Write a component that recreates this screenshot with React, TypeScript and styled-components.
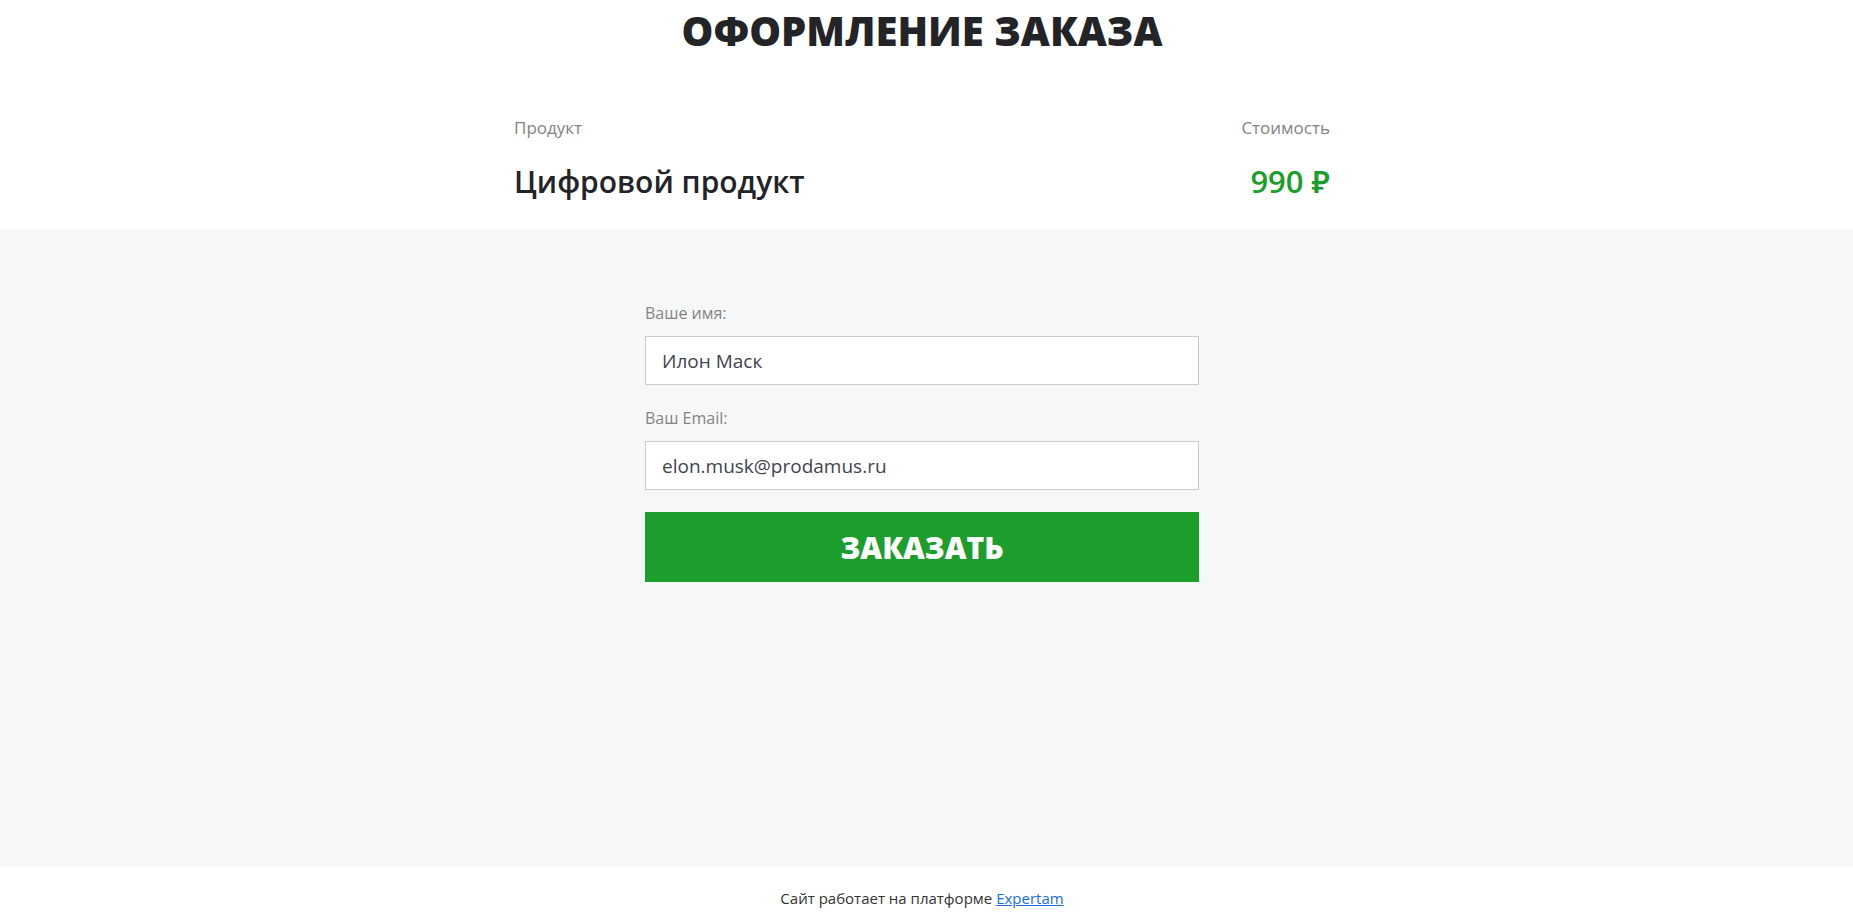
import React, { FC } from 'react';
import styled, { createGlobalStyle } from 'styled-components';

const Colors = {
    text: '#232427',
    subtle: '#848484',
    green: '#1b9e2b',
    border: '#cbcbcb',
    grayBg: '#f6f8f7',
    inputText: '#3f4450',
    link: '#1a6fe0',
};

const GlobalStyle = createGlobalStyle`
    * {
        box-sizing: border-box;
    }

    body {
        margin: 0;
        font-family: 'Open Sans', 'Noto Sans', sans-serif;
        color: ${Colors.text};
        background: #fff;
    }
`;

const Page = styled.div`
    display: flex;
    flex-direction: column;
    min-height: 100vh;
`;

const Header = styled.header`
    display: flex;
    flex-direction: column;
    align-items: center;

    padding: 7px 9px 29px 0;
`;

const Title = styled.h1`
    margin: 0;

    font-size: 40px;
    font-weight: 800;
    line-height: 48px;
    text-transform: uppercase;
    color: ${Colors.text};
`;

const ProductTable = styled.div`
    display: grid;
    grid-template-columns: 1fr auto;
    row-gap: 22px;

    width: 816px;
    margin-top: 61px;
`;

const ColumnLabel = styled.div<{ $right?: boolean }>`
    font-size: 17px;
    line-height: 24px;
    color: ${Colors.subtle};
    text-align: ${({ $right }) => ($right ? 'right' : 'left')};
`;

const ProductName = styled.div`
    font-size: 30px;
    font-weight: 600;
    line-height: 39px;
    color: ${Colors.text};
`;

const Price = styled.div`
    font-size: 31px;
    font-weight: 600;
    line-height: 39px;
    color: ${Colors.green};
    text-align: right;
`;

const FormSection = styled.section`
    flex: 1;
    display: flex;
    justify-content: center;

    padding: 72px 9px 0 0;

    background: ${Colors.grayBg};
`;

const OrderForm = styled.form`
    display: flex;
    flex-direction: column;

    width: 554px;
`;

const Label = styled.label`
    margin-bottom: 12px;

    font-size: 16px;
    line-height: 22px;
    color: ${Colors.subtle};
`;

const Input = styled.input`
    height: 49px;
    margin-bottom: 22px;
    padding: 0 16px;

    border: 1px solid ${Colors.border};
    border-radius: 0;
    outline: none;
    background: #fff;

    font-family: inherit;
    font-size: 19px;
    color: ${Colors.inputText};
`;

const SubmitButton = styled.button`
    height: 70px;

    border: none;
    background: ${Colors.green};

    font-family: inherit;
    font-size: 30px;
    font-weight: 800;
    line-height: 70px;
    text-transform: uppercase;
    color: #fff;
    cursor: pointer;
`;

const Footer = styled.footer`
    height: 54px;
    padding: 22px 9px 0 0;

    font-size: 15px;
    line-height: 20px;
    text-align: center;
    color: #333;

    a {
        color: ${Colors.link};
        text-decoration: underline;
    }
`;

const App: FC = () => {
    return (
        <Page>
            <GlobalStyle />
            <Header>
                <Title>Оформление заказа</Title>
                <ProductTable>
                    <ColumnLabel>Продукт</ColumnLabel>
                    <ColumnLabel $right>Стоимость</ColumnLabel>
                    <ProductName>Цифровой продукт</ProductName>
                    <Price>990 ₽</Price>
                </ProductTable>
            </Header>

            <FormSection>
                <OrderForm onSubmit={(e) => e.preventDefault()}>
                    <Label htmlFor='name'>Ваше имя:</Label>
                    <Input id='name' type='text' defaultValue='Илон Маск' />

                    <Label htmlFor='email'>Ваш Email:</Label>
                    <Input id='email' type='email' defaultValue='elon.musk@prodamus.ru' />

                    <SubmitButton type='submit'>Заказать</SubmitButton>
                </OrderForm>
            </FormSection>

            <Footer>
                Сайт работает на платформе <a href='#'>Expertam</a>
            </Footer>
        </Page>
    );
};

export default App;
